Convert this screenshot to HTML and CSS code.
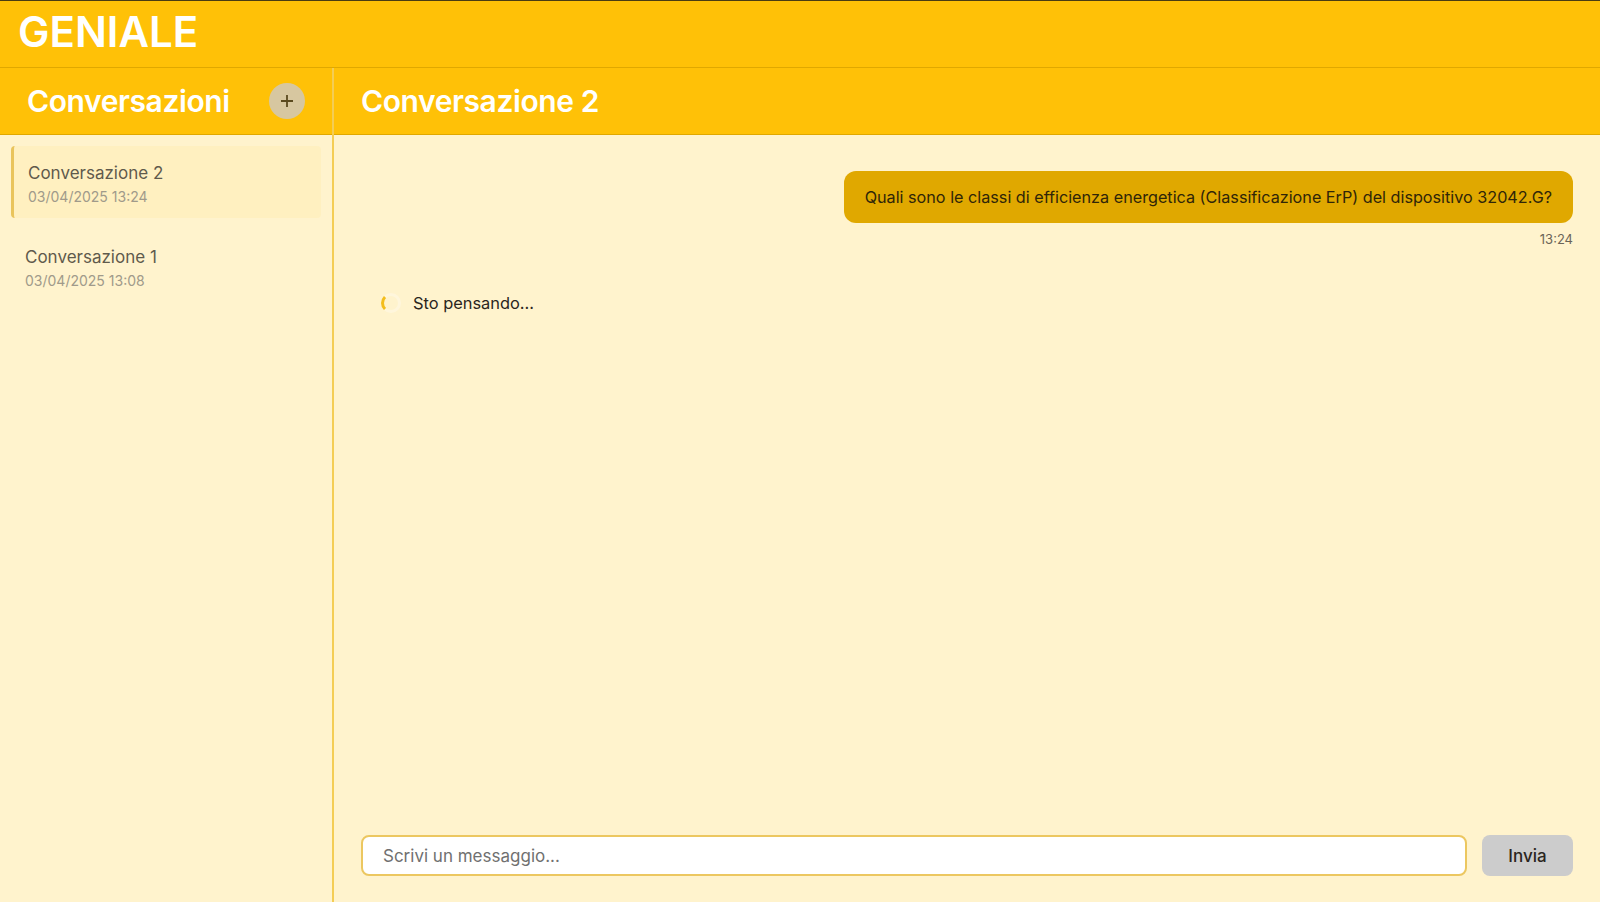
FILE: index.html
```html
<!DOCTYPE html>
<html lang="it">
<head>
<meta charset="utf-8">
<title>GENIALE</title>
<link rel="stylesheet" href="styles.css">
</head>
<body>
<div class="app">
  <header class="app-header">
    <h1 class="brand">GENIALE</h1>
  </header>
  <div class="content">
    <aside class="sidebar">
      <div class="panel-header">
        <h2 class="panel-title">Conversazioni</h2>
        <button class="new-btn" aria-label="Nuova conversazione">
          <svg width="14" height="14" viewBox="0 0 14 14"><path d="M7 1v12M1 7h12" stroke="#5b4a1e" stroke-width="1.8" fill="none"/></svg>
        </button>
      </div>
      <ul class="conv-list">
        <li class="conv-item active">
          <div class="conv-name">Conversazione 2</div>
          <div class="conv-date">03/04/2025 13:24</div>
        </li>
        <li class="conv-item">
          <div class="conv-name">Conversazione 1</div>
          <div class="conv-date">03/04/2025 13:08</div>
        </li>
      </ul>
    </aside>
    <main class="chat">
      <div class="panel-header chat-header">
        <h2 class="panel-title">Conversazione 2</h2>
      </div>
      <div class="messages">
        <div class="msg user">
          <div class="bubble">Quali sono le classi di efficienza energetica (Classificazione ErP) del dispositivo 32042.G?</div>
          <div class="msg-time">13:24</div>
        </div>
        <div class="thinking">
          <span class="spinner"></span>
          <span class="thinking-text">Sto pensando...</span>
        </div>
      </div>
      <form class="composer">
        <input class="composer-input" type="text" placeholder="Scrivi un messaggio...">
        <button class="send-btn" type="button">Invia</button>
      </form>
    </main>
  </div>
</div>
</body>
</html>
```

FILE: styles.css
```css
* { box-sizing: border-box; }
html, body { margin: 0; padding: 0; height: 100%; }
body {
  font-family: Inter, "Liberation Sans", Arial, sans-serif;
  background: #fff3cd;
  color: #212529;
}
.app {
  height: 100vh;
  display: flex;
  flex-direction: column;
  border-top: 1px solid #4a3c12;
}
.app-header {
  background: #ffc107;
  height: 67px;
  border-bottom: 1px solid #e0a800;
  display: flex;
  align-items: center;
  padding: 0 18px 5px;
  flex: none;
}
.brand {
  margin: 0;
  font-size: 42px;
  font-weight: 600;
  color: #fff;
  letter-spacing: 0;
}
.content {
  flex: 1;
  display: flex;
  min-height: 0;
}
.sidebar {
  width: 334px;
  flex: none;
  border-right: 2px solid #f4cd55;
  display: flex;
  flex-direction: column;
}
.panel-header {
  background: #ffc107;
  height: 67px;
  border-bottom: 1px solid #e0a800;
  display: flex;
  align-items: center;
  justify-content: space-between;
  padding: 0 27px;
  flex: none;
}
.panel-title {
  margin: 0;
  font-size: 30px;
  font-weight: 600;
  color: #fff;
  letter-spacing: -0.4px;
}
.new-btn {
  width: 36px;
  height: 36px;
  border-radius: 50%;
  border: none;
  background: #d7c7a0;
  display: flex;
  align-items: center;
  justify-content: center;
  padding: 0;
}
.conv-list {
  list-style: none;
  margin: 0;
  padding: 11px 11px;
}
.conv-item {
  padding: 16px 14px 13px 14px;
  margin-bottom: 12px;
  border-radius: 4px;
}
.conv-item.active {
  background: #fff0c0;
  border-left: 3px solid #e9c45c;
}
.conv-name {
  font-size: 17px;
  color: #5f5a4c;
  line-height: 22px;
}
.conv-date {
  font-size: 14px;
  color: #a09a8a;
  margin-top: 4px;
  line-height: 17px;
}
.chat {
  flex: 1;
  display: flex;
  flex-direction: column;
  min-width: 0;
}
.chat-header { padding: 0 27px; }
.messages {
  flex: 1;
  padding: 36px 27px;
  display: flex;
  flex-direction: column;
}
.msg.user {
  align-self: flex-end;
  display: flex;
  flex-direction: column;
  align-items: flex-end;
}
.bubble {
  background: #e0a800;
  color: #2f2508;
  font-size: 16.2px;
  line-height: 20px;
  padding: 16px 21px;
  border-radius: 12px;
}
.msg-time {
  font-size: 13px;
  color: #6b6558;
  margin-top: 8px;
}
.thinking {
  display: flex;
  align-items: center;
  gap: 12px;
  padding: 0 20px;
  margin-top: 46px;
}
.spinner {
  width: 20px;
  height: 20px;
  border-radius: 50%;
  border: 3px solid #fff6dc;
  border-left-color: #f3bd1c;
}
.thinking-text {
  font-size: 16.4px;
  color: #2a2520;
}
.composer {
  display: flex;
  gap: 15px;
  padding: 0 27px 26px;
  margin: 0;
  flex: none;
}
.composer-input {
  flex: 1;
  height: 41px;
  border: 2px solid #ecc760;
  border-radius: 8px;
  background: #fff;
  font-family: inherit;
  font-size: 17px;
  padding: 0 20px;
  color: #333;
  outline: none;
}
.composer-input::placeholder { color: #707070; }
.send-btn {
  width: 91px;
  height: 41px;
  border: none;
  border-radius: 8px;
  background: #cccccc;
  font-family: inherit;
  font-size: 17px;
  font-weight: 500;
  color: #2a2520;
}
```
